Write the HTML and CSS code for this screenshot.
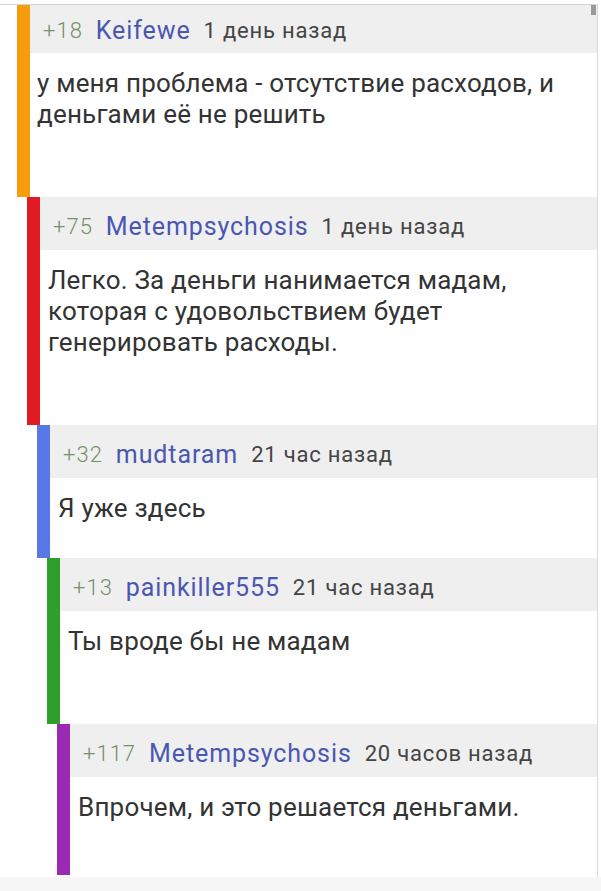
FILE: index.html
```html
<!DOCTYPE html>
<html lang="ru">
<head>
<meta charset="utf-8">
<link rel="stylesheet" href="styles.css">
</head>
<body>
<div class="page">
  <div class="thread">
    <div class="scroll"></div>
    <div class="comment d0 c1">
      <div class="bar orange"></div>
      <div class="main">
        <div class="head"><span class="score">+18</span><span class="name">Keifewe</span><span class="time">1 день назад</span></div>
        <div class="body">у меня проблема - отсутствие расходов, и деньгами её не решить</div>
      </div>
    </div>
    <div class="comment d1 c2">
      <div class="bar red"></div>
      <div class="main">
        <div class="head"><span class="score">+75</span><span class="name">Metempsychosis</span><span class="time">1 день назад</span></div>
        <div class="body">Легко. За деньги нанимается мадам, которая с удовольствием будет генерировать расходы.</div>
      </div>
    </div>
    <div class="comment d2 c3">
      <div class="bar blue"></div>
      <div class="main">
        <div class="head"><span class="score">+32</span><span class="name">mudtaram</span><span class="time">21 час назад</span></div>
        <div class="body">Я уже здесь</div>
      </div>
    </div>
    <div class="comment d3 c4">
      <div class="bar green"></div>
      <div class="main">
        <div class="head"><span class="score">+13</span><span class="name">painkiller555</span><span class="time">21 час назад</span></div>
        <div class="body">Ты вроде бы не мадам</div>
      </div>
    </div>
    <div class="comment d4 c5">
      <div class="bar purple"></div>
      <div class="main">
        <div class="head"><span class="score">+117</span><span class="name">Metempsychosis</span><span class="time">20 часов назад</span></div>
        <div class="body">Впрочем, и это решается деньгами.</div>
      </div>
    </div>
  </div>
  <div class="footer"></div>
</div>
</body>
</html>
```

FILE: styles.css
```css
* { box-sizing: border-box; }
html, body { margin: 0; padding: 0; background: #fff; }
body { font-family: Roboto, "Noto Sans", sans-serif; color: #333; }
.page { width: 601px; height: 891px; overflow: hidden; padding-top: 4px; }
.thread {
  position: relative;
  width: 598px;
  border-top: 1px solid #d4d4d4;
  border-right: 1px solid #dadada;
  padding-bottom: 2px;
}
.scroll { position: absolute; right: 1px; top: 0; width: 5px; height: 10px; background: #9a9a9a; z-index: 1; }
.comment { display: flex; }
.d0 { margin-left: 17px; }
.d1 { margin-left: 27px; }
.d2 { margin-left: 37px; }
.d3 { margin-left: 47px; }
.d4 { margin-left: 57px; }
.bar { width: 13px; flex: none; }
.orange { background: #f59d0c; }
.red { background: #e01b24; }
.blue { background: #5878e8; }
.green { background: #2f9e2c; }
.purple { background: #9a2ab4; }
.main { flex: 1; }
.head {
  display: flex;
  align-items: center;
  gap: 13px;
  height: 53px;
  padding: 5px 0 0 13px;
  background: #efefef;
  white-space: nowrap;
}
.c1 .head { height: 48px; padding-top: 2px; }
.score { color: #75906a; font-weight: 300; font-size: 22px; letter-spacing: 1px; }
.name { color: #4a57b2; font-size: 25px; letter-spacing: 0.9px; }
.time { color: #444; font-size: 22px; letter-spacing: 0.8px; }
.body {
  font-size: 26px;
  letter-spacing: 0.2px;
  line-height: 31px;
  padding: 15px 12px 0 7px;
  color: #333;
}
.c1 .body { height: 144px; }
.c2 .body { height: 175px; padding-left: 8px; }
.c3 .body { height: 80px; padding-left: 8px; }
.c4 .body { height: 113px; padding-left: 8px; }
.c5 .body { height: 98px; padding-left: 8px; }
.footer { height: 20px; background: #f6f6f6; }
```
